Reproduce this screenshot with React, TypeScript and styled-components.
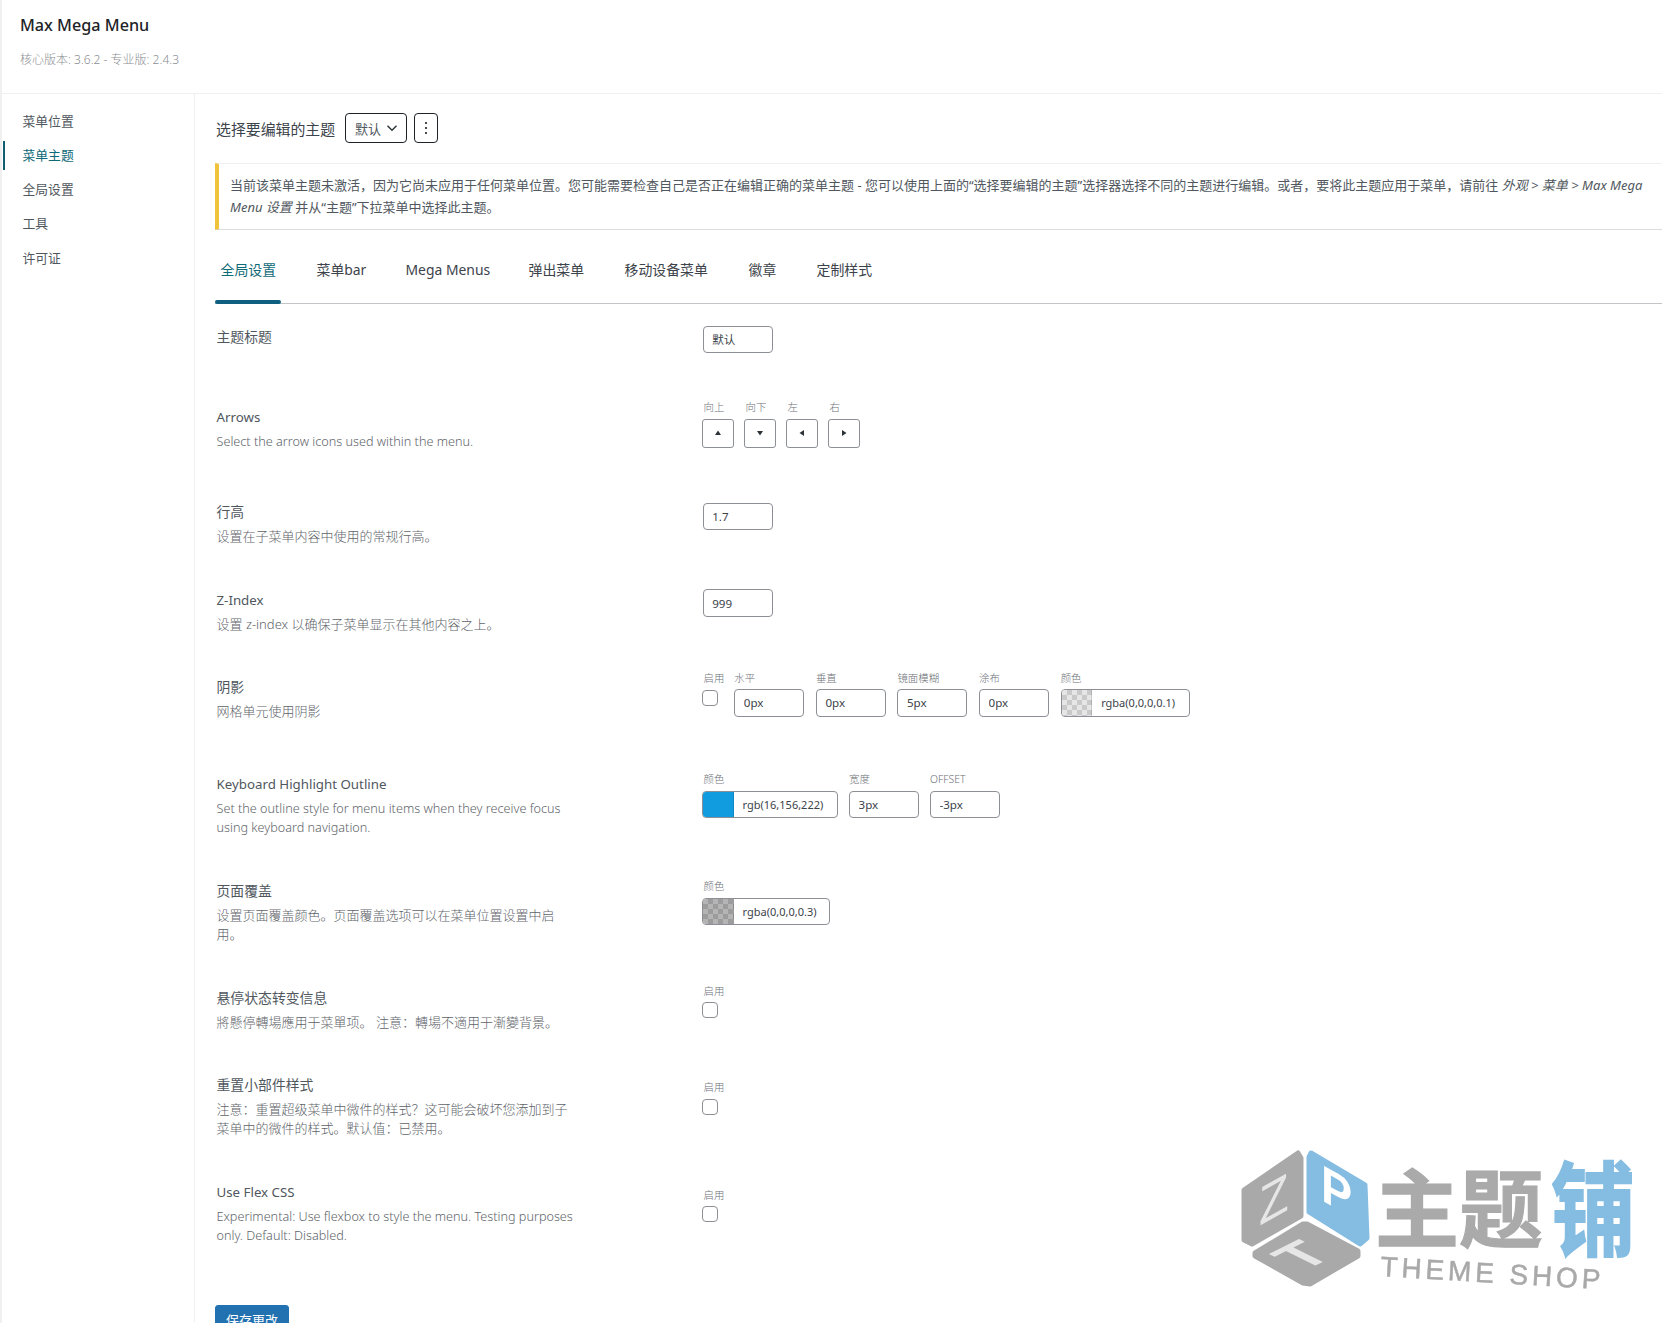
import React from "react";
import styled, { createGlobalStyle } from "styled-components";

const Global = createGlobalStyle`
  html, body { margin: 0; padding: 0; background: #fff; }
  body { font-family: "Noto Sans", "Noto Sans CJK SC", sans-serif; color: #3c434a; }
  * { box-sizing: border-box; }
`;

const Page = styled.div`
  position: relative;
  width: 1662px;
  height: 1323px;
  overflow: hidden;
  background: #fff;
  border-left: 2px solid #f0f0f1;
`;

const Header = styled.header`
  height: 94px;
  padding: 12px 0 0 18px;
  border-bottom: 1px solid #f0f0f1;
`;

const Title = styled.h1`
  margin: 0;
  font-size: 16.2px;
  line-height: 26px;
  font-weight: 500;
  color: #1d2327;
`;

const Version = styled.p`
  margin: 14px 0 0;
  font-size: 12px;
  line-height: 16px;
  color: #8c8f94;
  font-weight: 300;
`;

const Body = styled.div`
  display: flex;
  height: 1228px;
`;

const Sidebar = styled.nav`
  width: 193px;
  flex: none;
  padding-top: 9.5px;
  border-right: 1px solid #f0f0f1;
`;

const NavItem = styled.div<{ $active?: boolean }>`
  position: relative;
  height: 34.3px;
  line-height: 34px;
  padding-left: 20.5px;
  font-size: 12.8px;
  font-weight: 400;
  color: ${(p) => (p.$active ? "#0f6a78" : "#50575e")};
  ${(p) =>
    p.$active &&
    `&::before {
      content: "";
      position: absolute;
      left: 1px;
      top: 3px;
      width: 2px;
      height: 29px;
      background: #0f5f70;
    }`}
`;

const Main = styled.main`
  flex: 1;
  min-width: 0;
  padding: 19px 0 0 20px;
`;

const ThemeBar = styled.div`
  display: flex;
  align-items: center;
  height: 30px;
`;

const ThemeLabel = styled.span`
  font-size: 14.9px;
  font-weight: 400;
  color: #3c434a;
  width: 130px;
  padding-left: 1px;
  white-space: nowrap;
`;

const SelectBox = styled.div`
  width: 62px;
  height: 30px;
  border: 1px solid #1d2327;
  border-radius: 4px;
  display: flex;
  align-items: center;
  padding-left: 9px;
  gap: 5px;
  font-size: 13px;
  font-weight: 400;
  color: #50575e;
`;

const DotsButton = styled.div`
  width: 24px;
  height: 30px;
  margin-left: 7px;
  border: 1px solid #1d2327;
  border-radius: 4px;
  display: flex;
  align-items: center;
  justify-content: center;
`;

const Notice = styled.div`
  margin: 20px 0 0;
  height: 67px;
  padding: 10px 0 0 11px;
  border-left: 4px solid #f0c33c;
  border-top: 1px solid #f0f0f1;
  border-bottom: 1px solid #dcdcde;
  font-size: 13px;
  line-height: 22px;
  font-weight: 400;
  color: #50575e;
  em { font-style: italic; }
`;

const TabBar = styled.div`
  display: flex;
  height: 74px;
  align-items: flex-end;
  border-bottom: 1px solid #c3c4c7;
`;

const Tab = styled.div<{ $active?: boolean; $w: number }>`
  width: ${(p) => p.$w}px;
  height: 44px;
  flex: none;
  padding-left: 5.5px;
  font-size: 13.9px;
  line-height: 22px;
  font-weight: 400;
  white-space: nowrap;
  color: ${(p) => (p.$active ? "#0f6a78" : "#3c434a")};
`;

const TabMark = styled.div`
  position: absolute;
  left: 213px;
  top: 300px;
  width: 66px;
  height: 3.5px;
  border-radius: 2px;
  background: #0f6080;
`;

const Rows = styled.div`
  margin-top: 17px;
`;

const Row = styled.section<{ $h: number }>`
  display: grid;
  grid-template-columns: 487px 1fr;
  height: ${(p) => p.$h}px;
`;

const LeftCell = styled.div`
  padding: 2px 0 0 1.5px;
`;

const RowLabel = styled.h3<{ $latin?: boolean }>`
  margin: 0 0 1px;
  font-size: ${(p) => (p.$latin ? "13.3px" : "13.85px")};
  line-height: 28px;
  font-weight: 400;
  color: #50575e;
`;

const RowDesc = styled.p<{ $latin?: boolean }>`
  margin: 0;
  width: 360px;
  font-size: ${(p) => (p.$latin ? "12.65px" : "13px")};
  line-height: 19.4px;
  font-weight: 300;
  color: #60646a;
`;

const RightCell = styled.div<{ $top: number; $inset?: boolean }>`
  padding-top: ${(p) => p.$top}px;
  padding-left: ${(p) => (p.$inset ? "0.7px" : "0")};
`;

const Fields = styled.div<{ $gap: number }>`
  display: flex;
  gap: ${(p) => p.$gap}px;
`;

const Field = styled.div`
  display: flex;
  flex-direction: column;
`;

const CheckField = styled(Field)`
  width: 20.7px;
`;

const SmallLabel = styled.label<{ $inset?: boolean }>`
  height: 12px;
  margin-bottom: 5.5px;
  font-size: 10.4px;
  line-height: 12px;
  font-weight: 300;
  white-space: nowrap;
  color: #6c7076;
  padding-left: ${(p) => (p.$inset ? "1.5px" : "0")};
`;

const TextInput = styled.input`
  width: 70px;
  height: 27.5px;
  padding: 0 0 0 8.5px;
  border: 1px solid #8c8f94;
  border-radius: 4px;
  background: #fff;
  font-family: inherit;
  font-size: 11.6px;
  font-weight: 400;
  color: #3c434a;
  outline: none;
`;

const ColorField = styled.div<{ $w: number }>`
  width: ${(p) => p.$w}px;
  height: 27.5px;
  display: flex;
  align-items: stretch;
  border: 1px solid #8c8f94;
  border-radius: 4px;
  overflow: hidden;
  font-size: 11px;
  color: #3c434a;
`;

const Swatch = styled.span<{ $fill?: string; $a?: string; $b?: string }>`
  width: 30.5px;
  flex: none;
  margin-right: 9px;
  background: ${(p) =>
    p.$fill ?? `repeating-conic-gradient(${p.$a} 0% 25%, ${p.$b} 0% 50%) 0 0 / 10px 10px`};
  border-right: 1px solid rgba(0, 0, 0, 0.12);
`;

const ColorText = styled.span`
  align-self: center;
  white-space: nowrap;
`;

const ArrowButton = styled.div`
  width: 31.5px;
  height: 29px;
  border: 1px solid #8c8f94;
  border-radius: 3px;
  display: flex;
  align-items: center;
  justify-content: center;
`;

const Check = styled.input.attrs({ type: "checkbox" })<{ $drop?: number }>`
  appearance: none;
  width: 16px;
  height: 16px;
  margin: ${(p) => p.$drop ?? 0}px 0 0;
  border: 1px solid #8c8f94;
  border-radius: 4px;
  background: #fff;
`;

const SaveButton = styled.button`
  display: block;
  width: 74px;
  height: 32px;
  margin-top: 2px;
  padding: 0 0 4px;
  border: 1px solid #2271b1;
  border-radius: 3px;
  background: #2271b1;
  color: #fff;
  font-family: inherit;
  font-size: 13px;
`;

const Watermark = styled.svg`
  position: absolute;
  left: 1218px;
  top: 1120px;
  width: 442px;
  height: 203px;
  filter: blur(0.5px);
`;

const Tri = ({ d }: { d: "up" | "down" | "left" | "right" }) => {
  const pts = {
    up: "3,0.5 6,5 0,5",
    down: "0,1 6,1 3,5.5",
    left: "5,0 5,6 0.5,3",
    right: "1,0 5.5,3 1,6",
  }[d];
  return (
    <svg width="6" height="6" viewBox="0 0 6 6">
      <polygon points={pts} fill="#2c3338" />
    </svg>
  );
};

const tabs: [string, number][] = [
  ["全局设置", 96],
  ["菜单bar", 89],
  ["Mega Menus", 123],
  ["弹出菜单", 96],
  ["移动设备菜单", 124],
  ["徽章", 68],
  ["定制样式", 90],
];

export default function App() {
  return (
    <Page>
      <Global />
      <Header>
        <Title>Max Mega Menu</Title>
        <Version>核心版本: 3.6.2 - 专业版: 2.4.3</Version>
      </Header>
      <Body>
        <Sidebar>
          <NavItem>菜单位置</NavItem>
          <NavItem $active>菜单主题</NavItem>
          <NavItem>全局设置</NavItem>
          <NavItem>工具</NavItem>
          <NavItem>许可证</NavItem>
        </Sidebar>
        <Main>
          <ThemeBar>
            <ThemeLabel>选择要编辑的主题</ThemeLabel>
            <SelectBox>
              默认
              <svg width="12" height="12" viewBox="0 0 12 12" fill="none" stroke="#2c3338" strokeWidth="1.4">
                <path d="M1.5 3.8 6 8.3 10.5 3.8" />
              </svg>
            </SelectBox>
            <DotsButton>
              <svg width="4" height="14" viewBox="0 0 4 14" fill="#1d2327">
                <circle cx="2" cy="2" r="1.1" />
                <circle cx="2" cy="7" r="1.1" />
                <circle cx="2" cy="12" r="1.1" />
              </svg>
            </DotsButton>
          </ThemeBar>
          <Notice>
            当前该菜单主题未激活，因为它尚未应用于任何菜单位置。您可能需要检查自己是否正在编辑正确的菜单主题 - 您可以使用上面的“选择要编辑的主题”选择器选择不同的主题进行编辑。或者，要将此主题应用于菜单，请前往 <em>外观 &gt; 菜单 &gt; Max Mega Menu 设置</em> 并从“主题”下拉菜单中选择此主题。
          </Notice>
          <TabBar>
            {tabs.map(([t, w], i) => (
              <Tab key={t} $w={w} $active={i === 0}>
                {t}
              </Tab>
            ))}
          </TabBar>
          <Rows>
            <Row $h={80}>
              <LeftCell>
                <RowLabel>主题标题</RowLabel>
              </LeftCell>
              <RightCell $top={4.6} $inset>
                <TextInput defaultValue="默认" />
              </RightCell>
            </Row>
            <Row $h={95}>
              <LeftCell>
                <RowLabel $latin>Arrows</RowLabel>
                <RowDesc $latin>Select the arrow icons used within the menu.</RowDesc>
              </LeftCell>
              <RightCell $top={0.3}>
                <Fields $gap={10.5}>
                  {(
                    [
                      ["向上", "up"],
                      ["向下", "down"],
                      ["左", "left"],
                      ["右", "right"],
                    ] as const
                  ).map(([l, d]) => (
                    <Field key={d}>
                      <SmallLabel $inset>{l}</SmallLabel>
                      <ArrowButton>
                        <Tri d={d} />
                      </ArrowButton>
                    </Field>
                  ))}
                </Fields>
              </RightCell>
            </Row>
            <Row $h={88}>
              <LeftCell>
                <RowLabel>行高</RowLabel>
                <RowDesc>设置在子菜单内容中使用的常规行高。</RowDesc>
              </LeftCell>
              <RightCell $top={6.6} $inset>
                <TextInput defaultValue="1.7" />
              </RightCell>
            </Row>
            <Row $h={87}>
              <LeftCell>
                <RowLabel $latin>Z-Index</RowLabel>
                <RowDesc>设置 z-index 以确保子菜单显示在其他内容之上。</RowDesc>
              </LeftCell>
              <RightCell $top={5.3} $inset>
                <TextInput defaultValue="999" />
              </RightCell>
            </Row>
            <Row $h={97}>
              <LeftCell>
                <RowLabel>阴影</RowLabel>
                <RowDesc>网格单元使用阴影</RowDesc>
              </LeftCell>
              <RightCell $top={0.6}>
                <Fields $gap={11.6}>
                  <CheckField>
                    <SmallLabel $inset>启用</SmallLabel>
                    <Check $drop={1.4} />
                  </CheckField>
                  <Field>
                    <SmallLabel>水平</SmallLabel>
                    <TextInput defaultValue="0px" />
                  </Field>
                  <Field>
                    <SmallLabel>垂直</SmallLabel>
                    <TextInput defaultValue="0px" />
                  </Field>
                  <Field>
                    <SmallLabel>镜面模糊</SmallLabel>
                    <TextInput defaultValue="5px" />
                  </Field>
                  <Field>
                    <SmallLabel>涂布</SmallLabel>
                    <TextInput defaultValue="0px" />
                  </Field>
                  <Field>
                    <SmallLabel>颜色</SmallLabel>
                    <ColorField $w={129}>
                      <Swatch $a="#c9c9c9" $b="#e6e6e6" />
                      <ColorText>rgba(0,0,0,0.1)</ColorText>
                    </ColorField>
                  </Field>
                </Fields>
              </RightCell>
            </Row>
            <Row $h={107}>
              <LeftCell>
                <RowLabel $latin>Keyboard Highlight Outline</RowLabel>
                <RowDesc $latin>Set the outline style for menu items when they receive focus using keyboard navigation.</RowDesc>
              </LeftCell>
              <RightCell $top={5}>
                <Fields $gap={11}>
                  <Field>
                    <SmallLabel $inset>颜色</SmallLabel>
                    <ColorField $w={136}>
                      <Swatch $fill="rgb(16,156,222)" />
                      <ColorText>rgb(16,156,222)</ColorText>
                    </ColorField>
                  </Field>
                  <Field>
                    <SmallLabel>宽度</SmallLabel>
                    <TextInput defaultValue="3px" />
                  </Field>
                  <Field>
                    <SmallLabel>OFFSET</SmallLabel>
                    <TextInput defaultValue="-3px" />
                  </Field>
                </Fields>
              </RightCell>
            </Row>
            <Row $h={107}>
              <LeftCell>
                <RowLabel>页面覆盖</RowLabel>
                <RowDesc>设置页面覆盖颜色。页面覆盖选项可以在菜单位置设置中启用。</RowDesc>
              </LeftCell>
              <RightCell $top={5}>
                <Field>
                  <SmallLabel $inset>颜色</SmallLabel>
                  <ColorField $w={128}>
                    <Swatch $a="#9c9c9c" $b="#b4b4b4" />
                    <ColorText>rgba(0,0,0,0.3)</ColorText>
                  </ColorField>
                </Field>
              </RightCell>
            </Row>
            <Row $h={87}>
              <LeftCell>
                <RowLabel>悬停状态转变信息</RowLabel>
                <RowDesc>將懸停轉場應用于菜單项。 注意：轉場不適用于漸變背景。</RowDesc>
              </LeftCell>
              <RightCell $top={2.6}>
                <Field>
                  <SmallLabel $inset>启用</SmallLabel>
                  <Check />
                </Field>
              </RightCell>
            </Row>
            <Row $h={107}>
              <LeftCell>
                <RowLabel>重置小部件样式</RowLabel>
                <RowDesc>注意：重置超级菜单中微件的样式？这可能会破坏您添加到子菜单中的微件的样式。默认值：已禁用。</RowDesc>
              </LeftCell>
              <RightCell $top={12.3}>
                <Field>
                  <SmallLabel $inset>启用</SmallLabel>
                  <Check />
                </Field>
              </RightCell>
            </Row>
            <Row $h={127}>
              <LeftCell>
                <RowLabel $latin>Use Flex CSS</RowLabel>
                <RowDesc $latin>Experimental: Use flexbox to style the menu. Testing purposes only. Default: Disabled.</RowDesc>
              </LeftCell>
              <RightCell $top={12.6}>
                <Field>
                  <SmallLabel $inset>启用</SmallLabel>
                  <Check />
                </Field>
              </RightCell>
            </Row>
          </Rows>
          <SaveButton>保存更改</SaveButton>
        </Main>
      </Body>
      <TabMark />
      <Watermark viewBox="0 0 442 203">
        <g strokeWidth="5" strokeLinejoin="round">
          <polygon points="78,33 81,38 81,96 32,124 24,120 24,70" fill="#a9a9a9" stroke="#a9a9a9" />
          <polygon points="91,33 145,65 147,118 140,124 89,92 89,37" fill="#84bce2" stroke="#84bce2" />
          <polygon points="83,104 87,104 138,131 138,136 90,164 83,163 35,136 35,133" fill="#a9a9a9" stroke="#a9a9a9" />
        </g>
        <text transform="matrix(0.9 -0.5 0 1 39 106)" fontFamily="Liberation Sans" fontSize="54" fill="#e6e6e6">Z</text>
        <text transform="matrix(0.9 0.5 0 1 101 80)" fontFamily="Liberation Sans" fontWeight="700" fontSize="52" fill="#fff">P</text>
        <text transform="matrix(0.85 -0.42 0.85 0.42 83.4 151.5)" fontFamily="Liberation Sans" fontWeight="700" fontSize="60" fill="#e6e6e6">T</text>
        <text transform="matrix(1 0 0 1.02 155 121)" fontFamily="Noto Sans CJK SC" fontWeight="700" fontSize="84" fill="#aaaaaa" stroke="#aaaaaa" strokeWidth="1.2">
          主题
        </text>
        <text transform="matrix(1 0 0 1.22 331 128)" fontFamily="Noto Sans CJK SC" fontWeight="700" fontSize="84" fill="#84bce2" stroke="#84bce2" strokeWidth="1.6">
          铺
        </text>
        <text transform="rotate(3.4 160 156)" x="160" y="156" fontFamily="Liberation Sans" fontSize="28" letterSpacing="3.9" fill="#a9a9a9" stroke="#a9a9a9" strokeWidth="0.5">
          THEME SHOP
        </text>
      </Watermark>
    </Page>
  );
}
